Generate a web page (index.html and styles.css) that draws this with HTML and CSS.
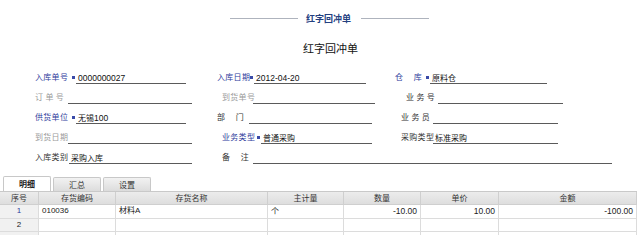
FILE: index.html
```html
<!DOCTYPE html>
<html lang="zh">
<head>
<meta charset="utf-8">
<title>红字回冲单</title>
<link rel="stylesheet" href="styles.css">
</head>
<body>
<div class="page">
  <div class="top">
    <span class="rule"></span>
    <span class="top-title">红字回冲单</span>
    <span class="rule"></span>
  </div>
  <div class="main-title">红字回冲单</div>

  <div class="form">
    <div class="row">
      <div class="fld w182"><span class="lab l41 blue">入库单号<i class="req"></i></span><span class="val v110 digits">0000000027</span></div>
      <div class="fld w178"><span class="lab l37 blue">入库日期<i class="req"></i></span><span class="val v112 digits">2012-04-20</span></div>
      <div class="fld"><span class="lab l35 blue">仓&nbsp;&nbsp;&nbsp;&nbsp;&nbsp;库<i class="req"></i></span><span class="val v117">原料仓</span></div>
    </div>
    <div class="row">
      <div class="fld w187"><span class="lab l33 gray">订&nbsp;单&nbsp;号</span><span class="val v124"></span></div>
      <div class="fld w184"><span class="lab l31 gray">到货单号</span><span class="val v122"></span></div>
      <div class="fld"><span class="lab l32 dark">业&nbsp;务&nbsp;号</span><span class="val v125"></span></div>
    </div>
    <div class="row">
      <div class="fld w182"><span class="lab l41 blue">供货单位<i class="req"></i></span><span class="val v110">无锡<span class="digits">100</span></span></div>
      <div class="fld w184"><span class="lab l32 dark">部&nbsp;&nbsp;&nbsp;&nbsp;&nbsp;门</span><span class="val v123"></span></div>
      <div class="fld"><span class="lab l32 dark">业&nbsp;务&nbsp;员</span><span class="val v125"></span></div>
    </div>
    <div class="row">
      <div class="fld w187"><span class="lab l33 gray">到货日期</span><span class="val v124"></span></div>
      <div class="fld w179"><span class="lab l39 blue">业务类型<i class="req"></i></span><span class="val v111">普通采购</span></div>
      <div class="fld"><span class="lab l32 dark">采购类型</span><span class="val v125">标准采购</span></div>
    </div>
    <div class="row">
      <div class="fld w187"><span class="lab l34 dark">入库类别</span><span class="val v123">采购入库</span></div>
      <div class="fld"><span class="lab l31 dark">备&nbsp;&nbsp;&nbsp;&nbsp;&nbsp;注</span><span class="val v359"></span></div>
    </div>
  </div>

  <div class="tabs">
    <span class="tab active">明细</span>
    <span class="tab">汇总</span>
    <span class="tab">设置</span>
  </div>

  <div class="grid">
    <div class="hd">序号</div>
    <div class="hd">存货编码</div>
    <div class="hd">存货名称</div>
    <div class="hd">主计量</div>
    <div class="hd">数量</div>
    <div class="hd">单价</div>
    <div class="hd">金额</div>

    <div class="cell idx blue">1</div>
    <div class="cell">010036</div>
    <div class="cell">材料A</div>
    <div class="cell cjk">个</div>
    <div class="cell num">-10.00</div>
    <div class="cell num">10.00</div>
    <div class="cell num">-100.00</div>

    <div class="cell idx">2</div>
    <div class="cell"></div>
    <div class="cell"></div>
    <div class="cell"></div>
    <div class="cell"></div>
    <div class="cell"></div>
    <div class="cell"></div>

    <div class="cell idx"></div>
    <div class="cell"></div>
    <div class="cell"></div>
    <div class="cell"></div>
    <div class="cell"></div>
    <div class="cell"></div>
    <div class="cell"></div>
  </div>
</div>
</body>
</html>
```
FILE: styles.css
```css
html, body {
  margin: 0;
  padding: 0;
  background: #ffffff;
}
body {
  font-family: "Liberation Sans", "Noto Sans CJK SC", sans-serif;
  font-size: 9px;
  color: #222;
}
.page {
  width: 637px;
  height: 235px;
  overflow: hidden;
}
.top {
  height: 37px;
  display: flex;
  align-items: center;
  padding-left: 230px;
  box-sizing: border-box;
}
.rule {
  width: 68px;
  height: 1px;
  background: #aeb3bd;
}
.top-title {
  font-family: "Noto Sans CJK SC", sans-serif;
  font-weight: bold;
  font-size: 9px;
  color: #24407f;
  margin: 0 10px 0 8px;
  line-height: 12px;
}
.main-title {
  height: 22px;
  line-height: 22px;
  padding-left: 303px;
  font-family: "Noto Sans CJK SC", sans-serif;
  font-size: 11px;
  color: #111;
}
.form {
  margin-top: 5px;
}
.row {
  height: 20px;
  display: flex;
  align-items: flex-end;
  padding-left: 35px;
}
.fld {
  display: flex;
  align-items: flex-end;
  flex: none;
}
.w178 { width: 178px; }
.w179 { width: 179px; }
.w182 { width: 182px; }
.w184 { width: 184px; }
.w187 { width: 187px; }
.lab {
  flex: none;
  display: flex;
  align-items: center;
  justify-content: space-between;
  white-space: nowrap;
  font-family: "Noto Sans CJK SC", sans-serif;
  font-size: 8px;
  line-height: 12px;
  height: 12px;
  padding-bottom: 1px;
  letter-spacing: 0.3px;
}
.l31 { width: 31px; }
.l32 { width: 32px; }
.l33 { width: 33px; }
.l34 { width: 34px; }
.l35 { width: 35px; }
.l37 { width: 37px; }
.l39 { width: 39px; }
.l41 { width: 41px; }
.req {
  display: inline-block;
  width: 3px;
  height: 3px;
  background: #3a4aa8;
  margin-right: 1px;
}
.blue { color: #2f3c9c; }
.gray { color: #9a9a9a; }
.dark { color: #333333; }
.val {
  flex: none;
  height: 12px;
  line-height: 12px;
  border-bottom: 1px solid #5a5a5a;
  font-size: 8px;
  color: #111;
  padding-left: 2px;
  box-sizing: border-box;
  white-space: nowrap;
  font-family: "Noto Sans CJK SC", sans-serif;
}
.digits {
  font-family: "Liberation Sans", sans-serif;
  font-size: 8.5px;
}
.v110 { width: 110px; }
.v111 { width: 111px; }
.v112 { width: 112px; }
.v117 { width: 117px; }
.v122 { width: 122px; }
.v123 { width: 123px; }
.v124 { width: 124px; }
.v125 { width: 125px; }
.v359 { width: 359px; }
.tabs {
  margin-top: 12px;
  height: 15px;
  display: flex;
  align-items: flex-end;
  padding-left: 3px;
  gap: 2px;
}
.tab {
  width: 46px;
  height: 13px;
  line-height: 13px;
  text-align: center;
  font-family: "Noto Sans CJK SC", sans-serif;
  font-size: 8px;
  color: #333;
  background: linear-gradient(#f2f2f2, #dcdcdc);
  border: 1px solid #c8c8c8;
  border-bottom: none;
  border-radius: 2px 2px 0 0;
}
.tab.active {
  height: 14px;
  line-height: 14px;
  background: #ffffff;
  font-weight: bold;
  color: #222;
}
.grid {
  display: grid;
  grid-template-columns: 39px 77px 152px 76px 77px 78px 1fr;
  grid-auto-rows: 13.4px;
  border-top: 1px solid #c9c9c9;
}
.hd {
  background: linear-gradient(#ececec, #dedede);
  border-right: 1px solid #cfcfcf;
  border-bottom: 1px solid #cfcfcf;
  text-align: center;
  font-family: "Noto Sans CJK SC", sans-serif;
  font-size: 8px;
  line-height: 12px;
  color: #333;
}
.cell {
  border-right: 1px solid #dcdcdc;
  border-bottom: 1px solid #dcdcdc;
  font-size: 8px;
  line-height: 12px;
  padding: 0 3px;
  white-space: nowrap;
  overflow: hidden;
  color: #222;
  font-family: "Liberation Sans", "Noto Sans CJK SC", sans-serif;
}
.cell.cjk {
  font-family: "Noto Sans CJK SC", sans-serif;
  color: #222;
}
.cell.idx {
  background: #f1f1f1;
  text-align: center;
  padding: 0;
}
.cell.idx.blue { color: #2f3c9c; }
.num {
  text-align: right;
  font-size: 8.5px;
}
```
